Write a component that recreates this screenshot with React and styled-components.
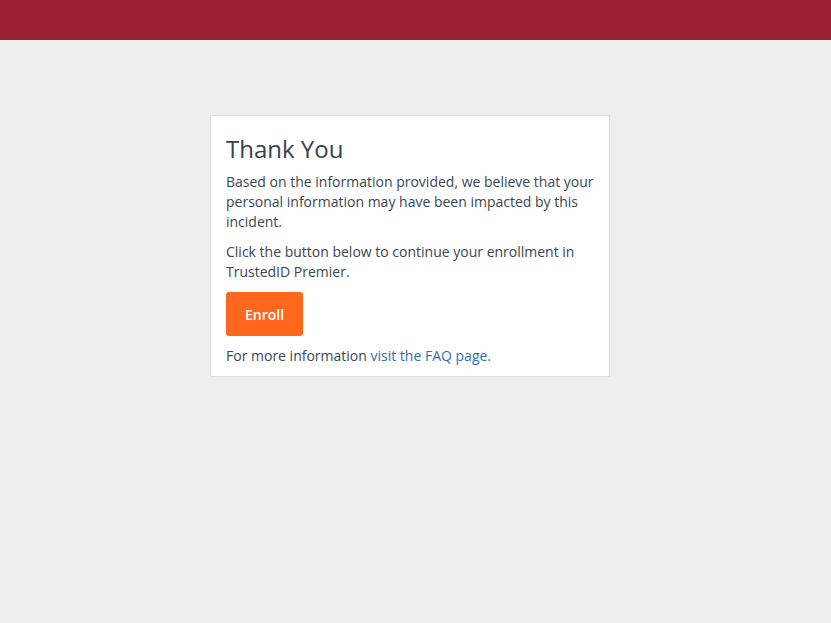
import React from "react";
import styled, { createGlobalStyle } from "styled-components";

const GlobalStyle = createGlobalStyle`
    body {
        margin: 0;
        background: #eeeeee;
        font-family: 'Open Sans', 'Liberation Sans', sans-serif;
        color: #3a4650;
    }
`;

function App() {
    return (
        <>
            <GlobalStyle />
            <TopBar />
            <Main>
                <Card>
                    <Title>Thank You</Title>
                    <Text>
                        Based on the information provided, we believe that your personal
                        information may have been impacted by this incident.
                    </Text>
                    <Text>
                        Click the button below to continue your enrollment in TrustedID Premier.
                    </Text>
                    <EnrollButton>Enroll</EnrollButton>
                    <Text last>
                        For more information <Link href="#">visit the FAQ page.</Link>
                    </Text>
                </Card>
            </Main>
        </>
    );
}

export default App;

const TopBar = styled.header`
    height: 40px;
    background: #9a1f33;
`;

const Main = styled.main`
    display: flex;
    justify-content: center;
    padding: 75px 11px 0 0;
`;

const Card = styled.section`
    width: 400px;
    box-sizing: border-box;
    background: #ffffff;
    border: 1px solid #dcdcdc;
    padding: 15px 15px 10px;
`;

const Title = styled.h1`
    margin: 5px 0 10px;
    font-size: 24px;
    font-weight: 400;
    line-height: 1.1;
    color: #36434d;
`;

const Text = styled.p`
    margin: 0 0 ${(p) => (p.last ? "0" : "10px")};
    font-size: 14px;
    line-height: 20px;
`;

const EnrollButton = styled.button`
    display: block;
    height: 44px;
    padding: 0 19px;
    margin: 1px 0 10px;
    border: none;
    border-radius: 3px;
    background: #ff671d;
    color: #ffffff;
    font-family: 'Open Sans', 'Liberation Sans', sans-serif;
    font-size: 14px;
    font-weight: 600;
    cursor: pointer;
`;

const Link = styled.a`
    color: #2f6fb0;
    text-decoration: none;
`;
